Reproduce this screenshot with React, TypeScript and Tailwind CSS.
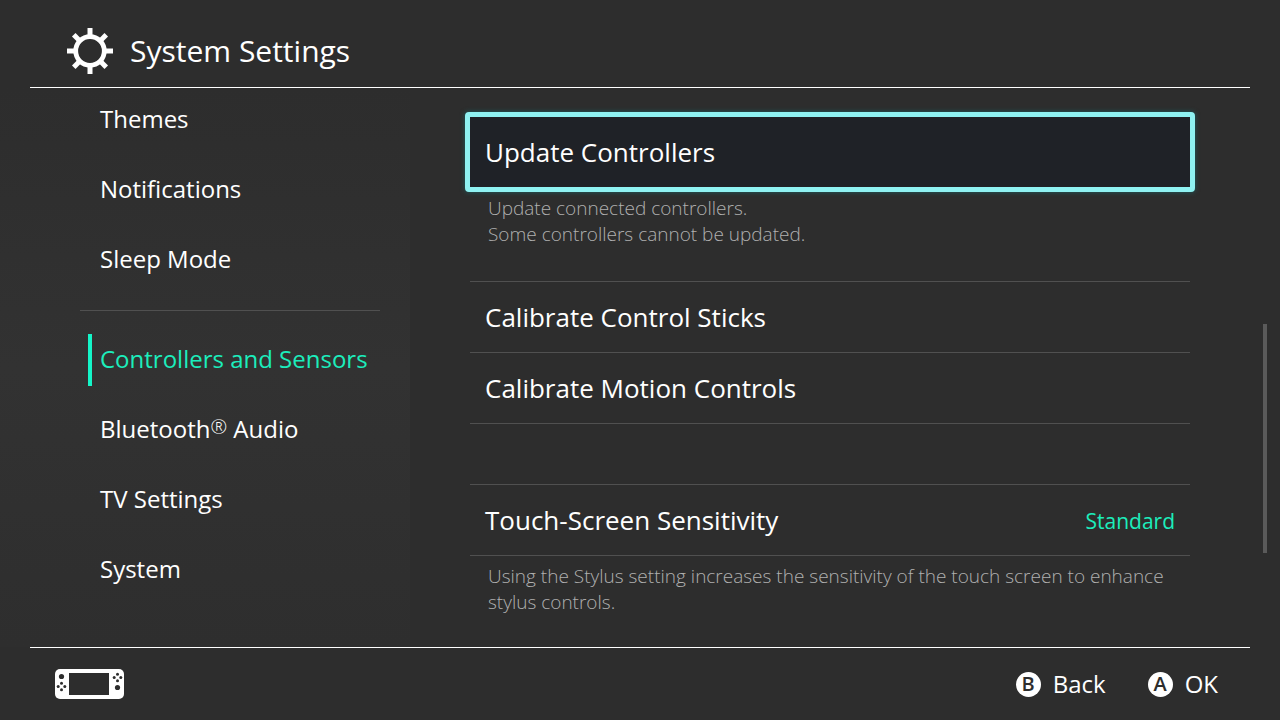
import type { ReactNode } from "react";

type NavItem = {
  id: string;
  label: ReactNode;
};

const generalItems: NavItem[] = [
  { id: "themes", label: "Themes" },
  { id: "notifications", label: "Notifications" },
  { id: "sleep", label: "Sleep Mode" },
];

const deviceItems: NavItem[] = [
  { id: "controllers", label: "Controllers and Sensors" },
  {
    id: "bluetooth",
    label: (
      <>
        Bluetooth<span className="relative -top-1 text-xl leading-none font-light">®</span> Audio
      </>
    ),
  },
  { id: "tv", label: "TV Settings" },
  { id: "system", label: "System" },
];

function GearIcon() {
  return (
    <svg aria-hidden="true" viewBox="-24 -24 48 48" className="h-12 w-12" fill="none" stroke="currentColor">
      <circle r="14.3" strokeWidth="4.8" />
      {[0, 45, 90, 135, 180, 225, 270, 315].map((angle) => (
        <path key={angle} d="M0-15V-23" strokeWidth="5" transform={`rotate(${angle})`} />
      ))}
    </svg>
  );
}

function ConsoleIcon() {
  return (
    <svg aria-hidden="true" viewBox="0 0 70 30" className="h-[30px] w-[70px]">
      <rect width="69" height="30" rx="5" fill="#fff" />
      <g fill="#2d2d2d">
        <rect x="14" y="4" width="40" height="22" />
        <circle cx="6.5" cy="7.5" r="2.6" />
        <circle cx="6.5" cy="14.2" r="1.5" />
        <circle cx="6.5" cy="20.8" r="1.5" />
        <circle cx="3.2" cy="17.5" r="1.5" />
        <circle cx="9.8" cy="17.5" r="1.5" />
        <circle cx="62.5" cy="5.2" r="1.5" />
        <circle cx="62.5" cy="11.8" r="1.5" />
        <circle cx="59.2" cy="8.5" r="1.5" />
        <circle cx="65.8" cy="8.5" r="1.5" />
        <circle cx="62.5" cy="18.5" r="2.6" />
      </g>
    </svg>
  );
}

function NavLink({ item, active }: { item: NavItem; active: boolean }) {
  return (
    <a
      href={`#${item.id}`}
      aria-current={active ? "page" : undefined}
      className={`ml-2 flex h-[52px] items-center border-l-4 pb-0.5 pl-2 text-2xl whitespace-nowrap ${
        active ? "border-[#14f5c8] text-[#1cedbc]" : "border-transparent"
      }`}
    >
      <span>{item.label}</span>
    </a>
  );
}

function SettingRow({ label, value }: { label: string; value?: string }) {
  return (
    <button
      type="button"
      className="-mb-px flex h-[72px] w-full items-center justify-between border-y border-[#505050] px-[15px] text-left text-[26px]"
    >
      <span>{label}</span>
      {value ? <span className="pt-1 text-[21px] text-[#1cedbc]">{value}</span> : null}
    </button>
  );
}

function HintButton({ letter, label }: { letter: string; label: string }) {
  return (
    <button type="button" className="flex items-center gap-3 text-2xl">
      <span className="flex h-[25px] w-[25px] items-center justify-center rounded-full bg-white text-xl leading-none font-semibold text-[#2d2d2d]">
        {letter}
      </span>
      <span>{label}</span>
    </button>
  );
}

export default function App() {
  return (
    <div className="flex min-h-screen flex-col bg-[#2d2d2d] font-['Open_Sans',sans-serif] text-white">
      <header className="mx-[30px] flex h-[88px] items-center gap-4 border-b border-white pt-[14px] pl-9">
        <GearIcon />
        <h1 className="text-[30px]">System Settings</h1>
      </header>

      <div className="flex flex-1">
        <nav
          aria-label="Settings"
          className="flex w-[410px] shrink-0 flex-col gap-[18px] bg-linear-to-b from-[#2d2d2d] via-[#323232] to-[#2e2e2e] pt-1.5 pr-[30px] pl-20"
        >
          {generalItems.map((item) => (
            <NavLink key={item.id} item={item} active={false} />
          ))}
          <hr className="mt-1.5 mb-[5px] border-[#505050]" />
          {deviceItems.map((item) => (
            <NavLink key={item.id} item={item} active={item.id === "controllers"} />
          ))}
        </nav>

        <main className="flex-1 pt-6 pr-[68px] pl-[55px]">
          <button
            type="button"
            className="flex h-20 w-full items-center rounded-sm border-5 border-[#8ff2f2] bg-[#1f2227] px-[15px] text-left text-[26px] shadow-[0_0_5px_#1c5f60]"
          >
            Update Controllers
          </button>
          <div className="px-[5px]">
            <p className="px-[18px] pt-[3px] text-[19px] leading-[26px] font-light text-[#b0b0b0]">
              Update connected controllers.
              <br />
              Some controllers cannot be updated.
            </p>
            <div className="mt-[34px]">
              <SettingRow label="Calibrate Control Sticks" />
              <SettingRow label="Calibrate Motion Controls" />
            </div>
            <div className="mt-[61px]">
              <SettingRow label="Touch-Screen Sensitivity" value="Standard" />
            </div>
            <p className="px-[18px] pt-2 text-[19px] leading-[26px] font-light text-[#b0b0b0]">
              Using the Stylus setting increases the sensitivity of the touch screen to enhance stylus controls.
            </p>
          </div>
        </main>

        {/* scroll thumb */}
        <div aria-hidden="true" className="mt-[236px] mr-[13px] h-[229px] w-1 shrink-0 bg-[#5a5a5a]" />
      </div>

      <footer className="mx-[30px] flex h-[73px] items-center justify-between border-t border-white pr-8 pl-[25px]">
        <ConsoleIcon />
        <div className="flex gap-[42px]">
          <HintButton letter="B" label="Back" />
          <HintButton letter="A" label="OK" />
        </div>
      </footer>
    </div>
  );
}
